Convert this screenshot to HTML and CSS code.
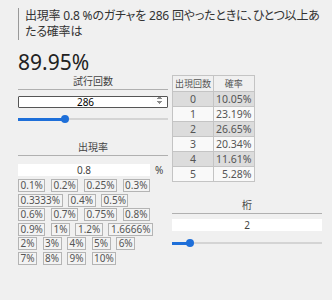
FILE: index.html
```html
<!DOCTYPE html>
<html>
<head>
<meta charset="utf-8">
<meta name="viewport" content="width=device-width, initial-scale=1">
<link rel="stylesheet" href="styles.css">
</head>
<body>

<div class="app">
  <blockquote class="question">出現率 0.8 %のガチャを 286 回やったときに、ひとつ以上あたる確率は</blockquote>
  <div class="answer">89.95%</div>

  <div class="columns">
    <div class="col">
      <div class="field">
        <div class="label">試行回数</div>
        <input class="num" type="number" value="286">
        <input class="slider" type="range" min="1" max="945" value="286" style="--fill: 47px">
      </div>

      <div class="field rate-field">
        <div class="label">出現率</div>
        <div class="rate">
          <input class="text" type="text" value="0.8">
          <span class="unit">%</span>
        </div>
        <div class="presets">
          <div class="row">
            <button>0.1%</button><button>0.2%</button><button>0.25%</button><button>0.3%</button>
          </div>
          <div class="row">
            <button>0.3333%</button><button>0.4%</button><button>0.5%</button>
          </div>
          <div class="row">
            <button>0.6%</button><button>0.7%</button><button>0.75%</button><button>0.8%</button>
          </div>
          <div class="row">
            <button>0.9%</button><button>1%</button><button>1.2%</button><button>1.6666%</button>
          </div>
          <div class="row">
            <button>2%</button><button>3%</button><button>4%</button><button>5%</button><button>6%</button>
          </div>
          <div class="row">
            <button>7%</button><button>8%</button><button>9%</button><button>10%</button>
          </div>
        </div>
      </div>
    </div>

    <div class="col">
      <table class="dist">
        <tr><th>出現回数</th><th>確率</th></tr>
        <tr><td>0</td><td>10.05%</td></tr>
        <tr><td>1</td><td>23.19%</td></tr>
        <tr><td>2</td><td>26.65%</td></tr>
        <tr><td>3</td><td>20.34%</td></tr>
        <tr><td>4</td><td>11.61%</td></tr>
        <tr><td>5</td><td>5.28%</td></tr>
      </table>

      <div class="field digits">
        <div class="label">桁</div>
        <input class="text" type="text" value="2">
        <input class="slider" type="range" min="0" max="20" value="2" style="--fill: 18px">
      </div>
    </div>
  </div>
</div>

</body>
</html>
```

FILE: styles.css
```css
body {
  margin: 0;
  background: #f0f0f0;
  color: #444;
  font-family: "Noto Sans", "Noto Sans CJK JP", sans-serif;
}

* {
  box-sizing: border-box;
}

.app {
  padding: 8px 10px 0 18px;
}

/* The question sentence */
.question {
  margin: 0 -4px 0 0;
  padding: 0 0 0 6px;
  border-left: 1px solid #999;
  font-size: 12px;
  line-height: 16px;
  letter-spacing: -0.2px;
  color: #333;
  font-feature-settings: "palt";
}

.answer {
  margin-top: 10px;
  font-size: 21px;
  line-height: 24px;
  color: #222;
}

/* Two columns under the answer */
.columns {
  display: flex;
  gap: 4px;
}

.col {
  width: 150px;
}

.label {
  text-align: center;
  font-size: 10px;
  line-height: 15px;
  border-bottom: 1px solid #b0b0b0;
}

.num {
  display: block;
  width: 100%;
  height: 12px;
  margin: 6px 0 0;
  padding: 0;
  border: 1px solid #555;
  border-radius: 1px;
  background: #fff;
  font: inherit;
  font-size: 10px;
  line-height: 10px;
  text-align: center;
}

.num::-webkit-inner-spin-button {
  opacity: 1;
  height: 10px;
}

.text {
  display: block;
  width: 100%;
  height: 12px;
  margin: 0;
  padding: 0;
  border: none;
  background: #fff;
  font: inherit;
  font-size: 10px;
  color: #444;
  text-align: center;
}

/* Sliders: thick blue part up to the thumb, thin grey rest */
.slider {
  -webkit-appearance: none;
  appearance: none;
  display: block;
  width: 100%;
  height: 8px;
  margin: 7px 0 0;
  background:
    linear-gradient(#1e6fd9, #1e6fd9) 0 50% / var(--fill) 3px no-repeat,
    linear-gradient(#d4d4d4, #d4d4d4) 0 50% / 100% 2px no-repeat;
}

.slider::-webkit-slider-thumb {
  -webkit-appearance: none;
  width: 8px;
  height: 8px;
  border-radius: 50%;
  background: #1e6fd9;
}

.rate-field {
  margin-top: 17px;
}

.rate {
  display: flex;
  align-items: center;
  gap: 5px;
  margin-top: 7px;
}

.rate .text {
  width: 132px;
}

.unit {
  font-size: 10px;
}

/* Preset rate buttons */
.presets {
  display: flex;
  flex-direction: column;
  gap: 1.5px;
  margin-top: 2px;
}

.presets .row {
  display: flex;
  gap: 5.5px;
}

.presets button {
  height: 13px;
  margin: 0;
  padding: 0 1.5px;
  border: 1px solid #b4b4b4;
  background: #f3f3f3;
  color: #555;
  font: inherit;
  font-size: 10px;
  line-height: 11px;
}

/* Distribution table */
.dist {
  margin-top: 1px;
  border-collapse: collapse;
  font-size: 10.5px;
  color: #555;
}

.dist th,
.dist td {
  border: 1px solid #c4c4c4;
  padding: 0 2px;
  height: 15px;
  line-height: 13px;
}

.dist th {
  height: 16px;
  font-size: 9px;
  font-weight: normal;
  background: #f0f0f0;
}

.dist td:first-child {
  width: 41px;
  text-align: center;
}

.dist td:last-child {
  width: 38px;
  text-align: right;
}

.dist tr:nth-child(even) td {
  background: #dcdcdc;
}

.dist tr:nth-child(odd) td {
  background: #f9f9f9;
}

.digits {
  margin-top: 16px;
}

.digits .text {
  margin-top: 5px;
}

.digits .slider {
  margin-top: 8px;
}
```
